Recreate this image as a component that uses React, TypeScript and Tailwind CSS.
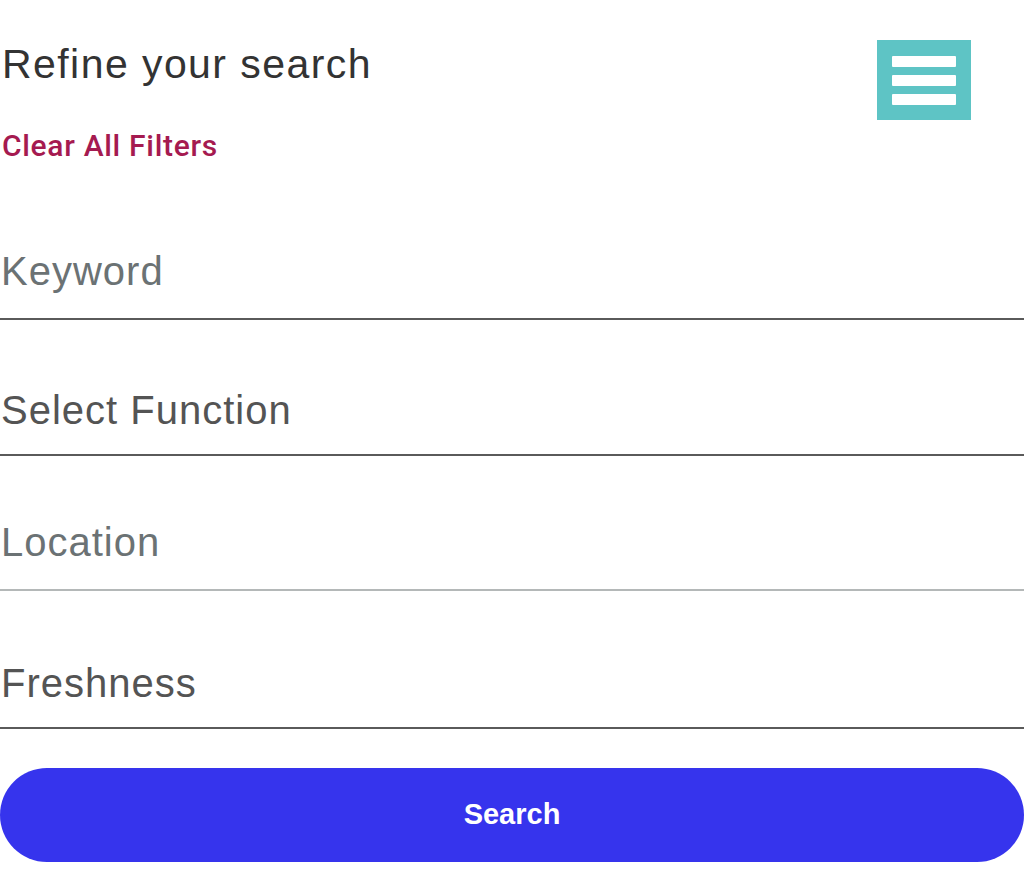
export default function App() {
    const fields = [
        { label: "Keyword", text: "text-[#6b7274]", line: "border-[#5a5a5a]", box: "h-[156px] pb-[24px]" },
        { label: "Select Function", text: "text-[#545454]", line: "border-[#5a5a5a]", box: "h-[136px] pb-[21px]" },
        { label: "Location", text: "text-[#6b7274]", line: "border-[#b4b8b8]", box: "h-[135px] pb-[24px]" },
        { label: "Freshness", text: "text-[#545454]", line: "border-[#5a5a5a]", box: "h-[138px] pb-[21px]" },
    ];

    return (
        <div className="w-[1024px] h-[892px] bg-white font-['Liberation_Sans',Arial,sans-serif] overflow-hidden">
            {/* 헤더 */}
            <div className="flex justify-between items-start">
                <div className="pt-[39px] pl-[2px]">
                    <h1 className="text-[41px] leading-[50px] text-[#333333] tracking-[0.035em]">
                        Refine your search
                    </h1>
                    <button className="mt-[39px] block text-[30px] leading-[36px] font-medium font-['Roboto',sans-serif] tracking-[0.023em] text-[#a51a50] cursor-pointer">
                        Clear All Filters
                    </button>
                </div>
                <button className="mt-[40px] mr-[53px] w-[94px] h-[80px] bg-[#5ec4c5] flex flex-col items-center justify-center gap-[8px] cursor-pointer">
                    <span className="block w-[64px] h-[11px] bg-white rounded-[1px]" />
                    <span className="block w-[64px] h-[11px] bg-white rounded-[1px]" />
                    <span className="block w-[64px] h-[11px] bg-white rounded-[1px]" />
                </button>
            </div>

            {/* 검색 필드 */}
            <div>
                {fields.map((f) => (
                    <div key={f.label} className={`flex items-end ${f.box} border-b-2 ${f.line}`}>
                        <p className={`text-[40px] leading-[46px] pl-[1px] tracking-[0.025em] ${f.text}`}>
                            {f.label}
                        </p>
                    </div>
                ))}
            </div>

            <button className="mt-[39px] w-full h-[94px] rounded-full bg-[#3634ed] text-white text-[29px] font-bold cursor-pointer">
                Search
            </button>
        </div>
    );
}
